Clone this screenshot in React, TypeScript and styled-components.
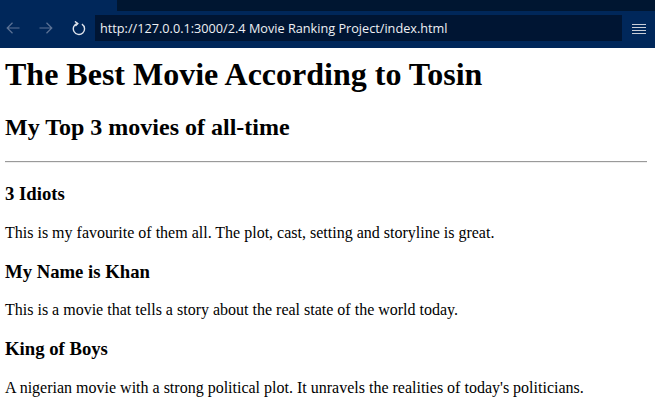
import React from "react";
import styled, { createGlobalStyle } from "styled-components";

const Global = createGlobalStyle`
  html, body { margin: 0; padding: 0; background: #ffffff; }
  body { font-family: "Liberation Serif", "Times New Roman", serif; color: #000; }
`;

const Frame = styled.div`
  display: flex;
  flex-direction: column;
  width: 655px;
`;

const TabStrip = styled.div`
  display: flex;
  height: 11px;
  background: #00275a;
`;

const TabArea = styled.div`
  flex: 1;
  margin-left: 117px;
  background: #001631;
`;

const Toolbar = styled.div`
  display: flex;
  align-items: flex-start;
  height: 37px;
  box-sizing: border-box;
  padding-top: 4px;
  background: #00275a;
`;

const NavButton = styled.div<{ $disabled?: boolean }>`
  width: 26px;
  height: 26px;
  margin-right: 7px;
  display: flex;
  align-items: center;
  justify-content: center;
  color: ${(p) => (p.$disabled ? "#5c7396" : "#dfe4ec")};
  &:last-child { margin-right: 3px; }
`;

const NavGroup = styled.div`
  display: flex;
`;

const UrlField = styled.div`
  width: 527px;
  height: 26px;
  background: #001533;
  display: flex;
  align-items: center;
  padding-left: 5px;
  box-sizing: border-box;
  font-family: "Open Sans", "Noto Sans", sans-serif;
  font-size: 12.7px;
  color: #eef0f4;
  white-space: nowrap;
  overflow: hidden;
`;

const MenuButton = styled.div`
  width: 33px;
  height: 26px;
  display: flex;
  align-items: center;
  justify-content: center;
  color: #c9ced8;
`;

const Page = styled.div`
  padding: 8px 8px 0 5px;
`;

const Title = styled.h1`
  font-size: 32px;
  font-weight: bold;
  margin: 0 0 21.44px;
`;

const Subtitle = styled.h2`
  font-size: 24px;
  font-weight: bold;
  margin: 21.44px 0 19.92px;
`;

const Rule = styled.hr`
  margin: 8px 0 19.9px;
  border: none;
  border-top: 1px solid #9a9a9a;
  border-bottom: 1px solid #eeeeee;
`;

const MovieTitle = styled.h3`
  font-size: 18.72px;
  font-weight: bold;
  margin: 18.72px 0;
`;

const Blurb = styled.p`
  font-size: 16px;
  margin: 16px 0;
`;

const ArrowLeft = () => (
  <svg width="14" height="12" viewBox="0 0 14 12" fill="none" stroke="currentColor" strokeWidth="1.2">
    <path d="M13.5 6H1M6.5 0.8L1.2 6l5.3 5.2" />
  </svg>
);

const ArrowRight = () => (
  <svg width="14" height="12" viewBox="0 0 14 12" fill="none" stroke="currentColor" strokeWidth="1.2">
    <path d="M0.5 6H13M7.5 0.8L12.8 6l-5.3 5.2" />
  </svg>
);

const Refresh = () => (
  <svg width="14" height="15" viewBox="0 0 14 15" fill="none" stroke="currentColor" strokeWidth="1.4">
    <path d="M9.9 3.1A5.6 5.6 0 1 1 5.6 2.4" />
    <path d="M2.9 0.4L5.8 2.5L3.4 5" />
  </svg>
);

const Hamburger = () => (
  <svg width="14" height="11" viewBox="0 0 14 11" fill="none" stroke="currentColor" strokeWidth="1">
    <path d="M0 1.5h14M0 4.5h14M0 7.5h14M0 10.5h14" />
  </svg>
);

const movies = [
  {
    title: "3 Idiots",
    text: "This is my favourite of them all. The plot, cast, setting and storyline is great.",
  },
  {
    title: "My Name is Khan",
    text: "This is a movie that tells a story about the real state of the world today.",
  },
  {
    title: "King of Boys",
    text: "A nigerian movie with a strong political plot. It unravels the realities of today's politicians.",
  },
];

export default function App() {
  return (
    <Frame>
      <Global />
      <TabStrip>
        <TabArea />
      </TabStrip>
      <Toolbar>
        <NavGroup>
          <NavButton $disabled>
            <ArrowLeft />
          </NavButton>
          <NavButton $disabled>
            <ArrowRight />
          </NavButton>
          <NavButton>
            <Refresh />
          </NavButton>
        </NavGroup>
        <UrlField>http://127.0.0.1:3000/2.4 Movie Ranking Project/index.html</UrlField>
        <MenuButton>
          <Hamburger />
        </MenuButton>
      </Toolbar>
      <Page>
        <Title>The Best Movie According to Tosin</Title>
        <Subtitle>My Top 3 movies of all-time</Subtitle>
        <Rule />
        {movies.map((m) => (
          <React.Fragment key={m.title}>
            <MovieTitle>{m.title}</MovieTitle>
            <Blurb>{m.text}</Blurb>
          </React.Fragment>
        ))}
      </Page>
    </Frame>
  );
}
